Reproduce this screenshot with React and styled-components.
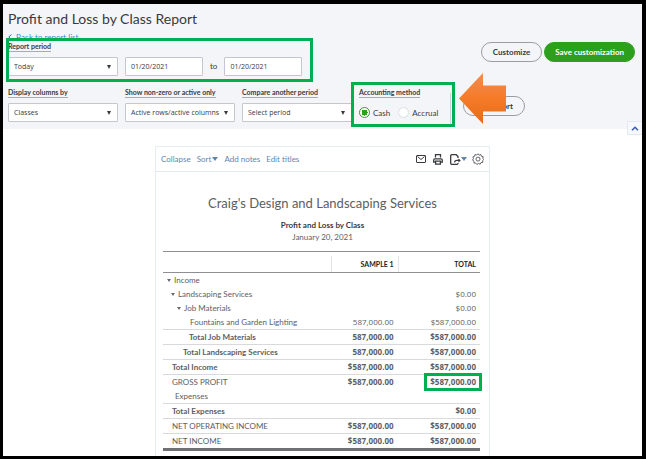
import React from "react";
import styled, { createGlobalStyle } from "styled-components";

const COLORS = {
  text: "#393a3d",
  muted: "#5c5e63",
  link: "#5f87ad",
  green: "#2ca01c",
  mark: "#00b050",
  header: "#f4f5f9",
  line: "#d8d9dc",
};

const ROWS = [
  { name: "Income", indent: 4, arrow: true },
  { name: "Landscaping Services", indent: 8, arrow: true, total: "$0.00" },
  { name: "Job Materials", indent: 14, arrow: true, total: "$0.00" },
  {
    name: "Fountains and Garden Lighting",
    indent: 27,
    sample: "587,000.00",
    total: "$587,000.00",
    line: true,
  },
  {
    name: "Total Job Materials",
    indent: 26,
    sample: "587,000.00",
    total: "$587,000.00",
    bold: true,
    line: true,
  },
  {
    name: "Total Landscaping Services",
    indent: 20,
    sample: "587,000.00",
    total: "$587,000.00",
    bold: true,
    line: true,
  },
  {
    name: "Total Income",
    indent: 9,
    sample: "$587,000.00",
    total: "$587,000.00",
    bold: true,
    line: true,
  },
  {
    name: "GROSS PROFIT",
    indent: 9,
    sample: "$587,000.00",
    total: "$587,000.00",
    boldValues: true,
    marked: true,
  },
  { name: "Expenses", indent: 12, line: true },
  { name: "Total Expenses", indent: 9, total: "$0.00", bold: true, line: true },
  {
    name: "NET OPERATING INCOME",
    indent: 9,
    sample: "$587,000.00",
    total: "$587,000.00",
    boldValues: true,
    line: true,
  },
  {
    name: "NET INCOME",
    indent: 9,
    sample: "$587,000.00",
    total: "$587,000.00",
    boldValues: true,
  },
];

const MailIcon = () => (
  <svg width="10" height="8" viewBox="0 0 10 8" fill="none" stroke="#393a3d">
    <rect x="0.5" y="0.5" width="9" height="7" rx="0.5" />
    <path d="M1.5 1.5 5 4.5 8.5 1.5" />
  </svg>
);

const PrintIcon = () => (
  <svg
    width="10"
    height="11"
    viewBox="0 0 10 11"
    fill="none"
    stroke="#393a3d"
    strokeWidth="1.3"
  >
    <path d="M2.5 3.5V0.7h5v2.8" />
    <path d="M2 8.2H0.7V6.2Q0.7 4.8 2 4.8h6Q9.3 4.8 9.3 6.2v2H8" />
    <path d="M2.6 7.2h4.8v3H2.6z" />
  </svg>
);

const ExportIcon = () => (
  <svg
    width="11"
    height="11"
    viewBox="0 0 11 11"
    fill="none"
    stroke="#393a3d"
    strokeWidth="1.3"
  >
    <path d="M8 4V2.6L6.2 0.7H1.7Q0.7 0.7 0.7 1.7v7.6q0 1 1 1H7q1 0 1-1V9" />
    <path d="M4.5 8.4Q4.7 6.4 7 6.4h3" />
    <path d="M8.4 4.4 10.8 6.4 8.4 8.4z" fill="#393a3d" stroke="none" />
  </svg>
);

const GearIcon = () => (
  <svg
    width="12"
    height="12"
    viewBox="0 0 24 24"
    fill="none"
    stroke="#55575b"
    strokeWidth="1.8"
  >
    <path d="m12 1.5 2.3 2.8 3.4-1.3 1 3.5 3.6.6-.6 3.6 2 2.3-2.5 2.3.4 3.5-3.7.4-1.6 3.2-3.3-1.5L9.8 23l-2.3-2.8-3.6-.1.1-3.7L1 14.3l1.9-3L1.7 7.8l3.5-1.1.7-3.5 3.6.9z" />
    <circle cx="12" cy="12.2" r="4" />
  </svg>
);

const ArrowCallout = () => (
  <Arrow viewBox="0 0 47 51" width="47" height="51" aria-hidden="true">
    <defs>
      <linearGradient id="arrow" x1="0" y1="0" x2="0" y2="1">
        <stop offset="0" stopColor="#f18c55" />
        <stop offset="0.5" stopColor="#f67b28" />
        <stop offset="1" stopColor="#e56b17" />
      </linearGradient>
    </defs>
    <path d="M0 25.5 24 0v12.5h23v26H24V51z" fill="url(#arrow)" />
  </Arrow>
);

const SelectField = ({ id, label, value }) => (
  <Field>
    <Label htmlFor={id}>{label}</Label>
    <SelectWrap>
      <Select id={id} defaultValue={value}>
        <option>{value}</option>
      </Select>
    </SelectWrap>
  </Field>
);

const ReportRow = ({ row }) => (
  <Row $line={row.line}>
    <NameCell scope="row" $indent={row.indent} $bold={row.bold}>
      {row.arrow && <Caret />}
      {row.name}
    </NameCell>
    <ValueCell $bold={row.bold || row.boldValues}>{row.sample}</ValueCell>
    <ValueCell $bold={row.bold || row.boldValues} $marked={row.marked}>
      {row.total}
    </ValueCell>
  </Row>
);

const App = () => (
  <Page>
    <GlobalStyle />
    <Header>
      <Title>Profit and Loss by Class Report</Title>
      <BackLink href="#reports">
        <svg width="4" height="6" viewBox="0 0 4 6" fill="none" stroke="#2a5fc0">
          <path d="M3.3 0.5 0.8 3l2.5 2.5" />
        </svg>
        Back to report list
      </BackLink>
      <FilterRow $align="flex-start">
        <Period>
          <SelectField id="period" label="Report period" value="Today" />
          <DateInput aria-label="From date" defaultValue="01/20/2021" />
          <To>to</To>
          <DateInput aria-label="To date" defaultValue="01/20/2021" />
        </Period>
        <Actions>
          <Button>Customize</Button>
          <Button $primary>Save customization</Button>
        </Actions>
      </FilterRow>
      <FilterRow $align="center">
        <Filters>
          <SelectField id="columns" label="Display columns by" value="Classes" />
          <SelectField
            id="active"
            label="Show non-zero or active only"
            value="Active rows/active columns"
          />
          <SelectField
            id="compare"
            label="Compare another period"
            value="Select period"
          />
          <MethodBox>
            <Method>
              <Label as="legend">Accounting method</Label>
              <Radios>
                <RadioLabel>
                  <Radio type="radio" name="method" defaultChecked />
                  Cash
                </RadioLabel>
                <RadioLabel>
                  <Radio type="radio" name="method" />
                  Accrual
                </RadioLabel>
              </Radios>
            </Method>
          </MethodBox>
        </Filters>
        <RunReport>
          <Button>Run report</Button>
          <ArrowCallout />
        </RunReport>
      </FilterRow>
      <CollapseTab aria-label="Hide filters">
        <svg width="8" height="5" viewBox="0 0 8 5" fill="none" stroke="#3a5bb5">
          <path d="M1 4.2 4 1.2l3 3" strokeWidth="1.5" />
        </svg>
      </CollapseTab>
    </Header>

    <Report>
      <Toolbar>
        <ToolLinks>
          <ToolLink href="#collapse">Collapse</ToolLink>
          <ToolLink href="#sort">
            Sort
            <Triangle />
          </ToolLink>
          <ToolLink href="#notes">Add notes</ToolLink>
          <ToolLink href="#titles">Edit titles</ToolLink>
        </ToolLinks>
        <ToolIcons>
          <IconButton aria-label="Email">
            <MailIcon />
          </IconButton>
          <IconButton aria-label="Print">
            <PrintIcon />
          </IconButton>
          <IconButton aria-label="Export">
            <ExportIcon />
            <Triangle />
          </IconButton>
          <IconButton aria-label="Settings">
            <GearIcon />
          </IconButton>
        </ToolIcons>
      </Toolbar>
      <Company>Craig's Design and Landscaping Services</Company>
      <ReportName>Profit and Loss by Class</ReportName>
      <ReportDate>January 20, 2021</ReportDate>
      <Table>
        <thead>
          <tr>
            <HeadCell as="td" $width="53%" />
            <HeadCell $width="21%" scope="col">
              <HeadText>SAMPLE 1</HeadText>
            </HeadCell>
            <HeadCell $width="26%" scope="col">
              <HeadText>TOTAL</HeadText>
            </HeadCell>
          </tr>
        </thead>
        <tbody>
          {ROWS.map((row) => (
            <ReportRow key={row.name} row={row} />
          ))}
        </tbody>
      </Table>
    </Report>
  </Page>
);

const GlobalStyle = createGlobalStyle`
  *, *::before, *::after {
    box-sizing: border-box;
  }

  body {
    margin: 0;
    font-family: Lato, "Open Sans", sans-serif;
    font-size: 8px;
    line-height: 10px;
    color: ${COLORS.text};
  }

  button, input, select {
    font: inherit;
    color: inherit;
  }
`;

const Page = styled.div`
  display: flex;
  flex-direction: column;
  min-height: 100vh;
  border: solid #000;
  border-width: 4px 4px 3px 3px;
  background: #fff;
`;

const Header = styled.header`
  position: relative;
  padding: 5px 7px 5px 5px;
  background: ${COLORS.header};
`;

const Title = styled.h1`
  margin: 0;
  font-size: 14px;
  font-weight: 400;
  line-height: 20px;
`;

const BackLink = styled.a`
  display: flex;
  align-items: center;
  gap: 4px;
  margin-top: 3px;
  color: #2f8fd8;
  text-decoration: none;
`;

const FilterRow = styled.div`
  display: flex;
  justify-content: space-between;
  align-items: ${({ $align }) => $align};

  & + & {
    margin-top: 12px;
  }
`;

const Period = styled.div`
  position: relative;
  display: flex;
  align-items: flex-end;
  gap: 7px;

  &::after {
    content: "";
    position: absolute;
    inset: -4px -11px -6px -2px;
    border: 3px solid ${COLORS.mark};
    pointer-events: none;
  }
`;

const Filters = styled.div`
  display: flex;
  align-items: flex-start;
  gap: 7px;
`;

const Field = styled.div`
  display: flex;
  flex-direction: column;
  align-items: flex-start;
  gap: 5px;
  width: 110px;
`;

const Label = styled.label`
  padding: 0;
  border-bottom: 1px solid #a9abb0;
  font-size: 7px;
  font-weight: 700;
  line-height: 9px;
  white-space: nowrap;
`;

const SelectWrap = styled.div`
  position: relative;
  width: 100%;

  &::after {
    content: "";
    position: absolute;
    top: 8px;
    right: 7px;
    border: 2px solid transparent;
    border-top: 4px solid ${COLORS.text};
    border-bottom: 0;
    pointer-events: none;
  }
`;

const Select = styled.select`
  appearance: none;
  display: block;
  width: 100%;
  height: 19px;
  padding: 0 0 0 5px;
  border: 1px solid #c4c7ce;
  border-radius: 1px;
  background: #fff;
  font-family: "Open Sans", sans-serif;
  font-size: 7px;
`;

const DateInput = styled.input`
  width: 78px;
  height: 19px;
  padding: 0 5px;
  border: 1px solid #c4c7ce;
  border-radius: 1px;
  background: #fff;
  font-family: "Open Sans", sans-serif;
  font-size: 7px;
`;

const To = styled.span`
  line-height: 19px;
`;

const Actions = styled.div`
  display: flex;
  gap: 2px;
`;

const Button = styled.button`
  height: 20px;
  padding: 0 ${({ $primary }) => ($primary ? 10 : 11)}px;
  border: 1px solid ${({ $primary }) => ($primary ? COLORS.green : "#9b9da2")};
  border-radius: 10px;
  background: ${({ $primary }) => ($primary ? COLORS.green : "transparent")};
  color: ${({ $primary }) => ($primary ? "#fff" : COLORS.text)};
  font-weight: 700;
  white-space: nowrap;
`;

const MethodBox = styled.div`
  position: relative;

  &::after {
    content: "";
    position: absolute;
    inset: -6px -4px -3px -8px;
    border: 3px solid ${COLORS.mark};
    pointer-events: none;
  }
`;

const Method = styled.fieldset`
  width: 92px;
  min-width: 0;
  height: 36px;
  margin: 0;
  padding: 0;
  border: 0;
  border-right: 1px solid #cfd1d6;
`;

const Radios = styled.div`
  display: flex;
  gap: 8px;
  padding-top: 9px;
`;

const RadioLabel = styled.label`
  display: flex;
  align-items: center;
  gap: 3px;
`;

const Radio = styled.input`
  appearance: none;
  width: 11px;
  height: 11px;
  margin: 0;
  border: 1px solid #dcdee2;
  border-radius: 50%;
  background: #fff;

  &:checked {
    border-color: ${COLORS.green};
    background: radial-gradient(circle, ${COLORS.green} 3px, #fff 3px);
  }
`;

const RunReport = styled.div`
  position: relative;
  margin-right: 110px;
`;

const Arrow = styled.svg`
  position: absolute;
  top: -23px;
  left: -4px;
`;

const CollapseTab = styled.button`
  position: absolute;
  right: 0;
  bottom: -6px;
  display: grid;
  place-items: center;
  width: 15px;
  height: 14px;
  padding: 0;
  border: 1px solid #e3e9f3;
  border-right: 0;
  background: #f6f8fc;
`;

const Report = styled.main`
  flex: 1;
  width: 100%;
  max-width: 335px;
  margin: 17px auto 0;
  border: 1px solid #e6ecf5;
  border-bottom: 0;
`;

const Toolbar = styled.div`
  display: flex;
  justify-content: space-between;
  align-items: center;
  height: 25px;
  padding: 0 5px;
  border-bottom: 1px solid #e1e9f4;
`;

const ToolLinks = styled.nav`
  display: flex;
  gap: 6px;
`;

const ToolLink = styled.a`
  display: flex;
  align-items: center;
  gap: 1px;
  color: ${COLORS.link};
  text-decoration: none;
`;

const Triangle = styled.span`
  border: 3px solid transparent;
  border-top: 4px solid ${COLORS.link};
  border-bottom: 0;
`;

const ToolIcons = styled.div`
  display: flex;
  align-items: center;
  gap: 7px;
`;

const IconButton = styled.button`
  display: flex;
  align-items: center;
  padding: 0;
  border: 0;
  background: none;

  &:last-child {
    margin-left: -2px;
  }
`;

const Company = styled.h2`
  margin: 21px 0 0;
  color: ${COLORS.muted};
  font-size: 13px;
  font-weight: 400;
  line-height: 20px;
  text-align: center;
`;

const ReportName = styled.h3`
  margin: 7px 0 0;
  font-size: 8px;
  font-weight: 700;
  line-height: 11px;
  text-align: center;
`;

const ReportDate = styled.p`
  margin: 0;
  color: ${COLORS.muted};
  line-height: 12px;
  text-align: center;
`;

const Table = styled.table`
  width: calc(100% - 16px);
  margin: 8px 9px 0 7px;
  table-layout: fixed;
  border-collapse: separate;
  border-spacing: 0;
  border-top: 1px solid #8d8f93;
  border-bottom: 3px solid #6f7073;
`;

const HeadCell = styled.th`
  width: ${({ $width }) => $width};
  height: 21px;
  padding: 3px 0 0;
  border-bottom: 1px solid #8d8f93;
`;

const HeadText = styled.div`
  padding-right: 4px;
  border-left: 1px solid #e3e4e6;
  color: #222;
  font-size: 7px;
  font-weight: 700;
  line-height: 16px;
  text-align: right;
`;

const Row = styled.tr`
  > * {
    height: ${({ $line }) => ($line ? "15px" : "14px")};
    border-bottom: ${({ $line }) =>
      $line ? `1px solid ${COLORS.line}` : "0"};
  }
`;

const NameCell = styled.th`
  padding: 0 0 0 ${({ $indent }) => $indent}px;
  color: ${COLORS.muted};
  font-weight: ${({ $bold }) => ($bold ? 700 : 400)};
  text-align: left;
  white-space: nowrap;
`;

const Caret = styled.span`
  display: inline-block;
  margin-right: 3px;
  border: 2px solid transparent;
  border-top: 3px solid #6b6c72;
  border-bottom: 0;
  vertical-align: middle;
`;

const ValueCell = styled.td`
  position: relative;
  padding: 0 4px 0 0;
  color: ${COLORS.muted};
  font-family: "Open Sans", sans-serif;
  font-weight: ${({ $bold }) => ($bold ? 700 : 400)};
  text-align: right;

  &::after {
    content: "";
    display: ${({ $marked }) => ($marked ? "block" : "none")};
    position: absolute;
    inset: -2px -2px -2px 26px;
    border: 3px solid ${COLORS.mark};
  }
`;

export default App;
